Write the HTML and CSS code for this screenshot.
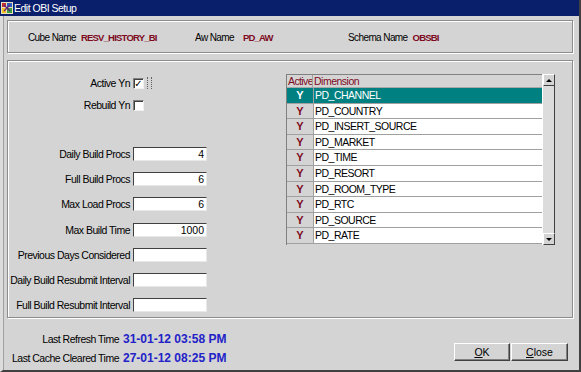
FILE: index.html
```html
<!DOCTYPE html>
<html>
<head>
  <title>Edit OBI Setup</title>
  <link rel="stylesheet" href="styles.css">
</head>
<body>
  <div class="window">
    <div class="titlebar">
      <svg class="app-icon" width="12" height="12" viewBox="0 0 12 12">
        <rect x="0" y="0" width="12" height="12" fill="#e8e0c0"/>
        <rect x="1" y="1" width="4" height="4" fill="#c03030"/>
        <rect x="6" y="1" width="5" height="4" fill="#3060c0"/>
        <rect x="1" y="6" width="4" height="5" fill="#f0c020"/>
        <rect x="6" y="6" width="5" height="5" fill="#40a040"/>
        <path d="M3 3 L9 9 M9 3 L3 9" stroke="#602080" stroke-width="1.2"/>
      </svg>
      <span>Edit OBI Setup</span>
    </div>

    <div class="content">
      <div class="panel header-panel">
        <div class="hdr-field cube"><span class="lbl">Cube Name</span><span class="val">RESV_HISTORY_BI</span></div>
        <div class="hdr-field aw"><span class="lbl">Aw Name</span><span class="val">PD_AW</span></div>
        <div class="hdr-field schema"><span class="lbl">Schema Name</span><span class="val">OBSBI</span></div>
      </div>

      <div class="panel main-panel">
        <div class="form">
          <div class="check-row first"><label>Active Yn</label><span class="check checked">&#10003;</span><span class="focus-mark"></span></div>
          <div class="check-row"><label>Rebuild Yn</label><span class="check"></span></div>

          <div class="fields">
            <div class="field-row"><label>Daily Build Procs</label><span class="input">4</span></div>
            <div class="field-row"><label>Full Build Procs</label><span class="input">6</span></div>
            <div class="field-row"><label>Max Load Procs</label><span class="input">6</span></div>
            <div class="field-row"><label>Max Build Time</label><span class="input">1000</span></div>
            <div class="field-row"><label>Previous Days Considered</label><span class="input"></span></div>
            <div class="field-row"><label>Daily Build Resubmit Interval</label><span class="input"></span></div>
            <div class="field-row"><label>Full Build Resubmit Interval</label><span class="input"></span></div>
          </div>
        </div>

        <div class="grid-wrap">
          <div class="grid">
            <div class="grid-head"><span class="c-active">Active</span><span class="c-dim">Dimension</span></div>
            <div class="grid-row selected"><span class="c-active">Y</span><span class="c-dim">PD_CHANNEL</span></div>
            <div class="grid-row"><span class="c-active">Y</span><span class="c-dim">PD_COUNTRY</span></div>
            <div class="grid-row"><span class="c-active">Y</span><span class="c-dim">PD_INSERT_SOURCE</span></div>
            <div class="grid-row"><span class="c-active">Y</span><span class="c-dim">PD_MARKET</span></div>
            <div class="grid-row"><span class="c-active">Y</span><span class="c-dim">PD_TIME</span></div>
            <div class="grid-row"><span class="c-active">Y</span><span class="c-dim">PD_RESORT</span></div>
            <div class="grid-row"><span class="c-active">Y</span><span class="c-dim">PD_ROOM_TYPE</span></div>
            <div class="grid-row"><span class="c-active">Y</span><span class="c-dim">PD_RTC</span></div>
            <div class="grid-row"><span class="c-active">Y</span><span class="c-dim">PD_SOURCE</span></div>
            <div class="grid-row"><span class="c-active">Y</span><span class="c-dim">PD_RATE</span></div>
          </div>
          <div class="scrollbar">
            <span class="sb-btn"><span class="arrow up"></span></span>
            <span class="sb-track"></span>
            <span class="sb-btn"><span class="arrow down"></span></span>
          </div>
        </div>
      </div>

      <div class="footer">
        <div class="times">
          <span class="t-lbl">Last Refresh Time</span><span class="t-val">31-01-12 03:58 PM</span>
          <span class="t-lbl">Last Cache Cleared Time</span><span class="t-val">27-01-12 08:25 PM</span>
        </div>
        <div class="buttons">
          <button class="btn"><u>O</u>K</button>
          <button class="btn"><u>C</u>lose</button>
        </div>
      </div>
    </div>
  </div>
</body>
</html>
```

FILE: styles.css
```css
body {
  margin: 0;
  width: 581px;
  height: 372px;
  overflow: hidden;
  background-color: #d4d4d4;
  font-family: "Liberation Sans", Arial, sans-serif;
  font-size: 10.5px;
  letter-spacing: -0.5px;
  color: #000;
}
.window {
  width: 581px;
  height: 372px;
  box-sizing: border-box;
  border-right: 2px solid #404040;
  border-bottom: 2px solid #404040;
  border-left: 3px solid #dcdcdc;
  display: flex;
  flex-direction: column;
}
.titlebar {
  height: 16px;
  margin-left: -3px;
  background-color: #0a1f6c;
  color: #fff;
  display: flex;
  align-items: center;
  padding-left: 1px;
}
.app-icon {
  margin-right: 1px;
}
.content {
  flex: 1;
  padding: 4px 6px 0 3px;
  border-left: 1px solid #a0a0a0;
}
.panel {
  border: 1px solid #8c8c8c;
  box-shadow: inset 1px 1px 0 #fff, 1px 1px 0 #fff;
  box-sizing: border-box;
}
.header-panel {
  height: 33px;
  display: flex;
  align-items: center;
  padding-left: 20px;
}
.hdr-field .lbl {
  font-size: 10px;
  letter-spacing: -0.6px;
  margin-right: 5px;
}
.hdr-field.aw .lbl {
  margin-right: 9px;
}
.hdr-field .val {
  color: #7d0a1e;
  font-weight: bold;
  font-size: 9.5px;
  letter-spacing: -0.8px;
}
.hdr-field.cube {
  width: 167px;
}
.hdr-field.aw {
  width: 153px;
}
.main-panel {
  margin-top: 7px;
  height: 258px;
  display: flex;
  justify-content: space-between;
  padding-right: 17px;
}
.form {
  width: 210px;
  padding-top: 15px;
}
.check-row {
  display: flex;
  align-items: center;
  height: 14px;
}
.check-row + .check-row {
  margin-top: 8px;
}
.check-row label,
.field-row label {
  width: 122px;
  text-align: right;
  margin-right: 3px;
  white-space: nowrap;
}
.check {
  width: 11px;
  height: 11px;
  box-sizing: border-box;
  background-color: #fff;
  border-top: 1px solid #808080;
  border-left: 1px solid #808080;
  border-right: 1px solid #f0f0f0;
  border-bottom: 1px solid #f0f0f0;
  box-shadow: inset 1px 1px 0 #404040;
  font-size: 10px;
  line-height: 10px;
  letter-spacing: 0;
  text-align: center;
  font-weight: bold;
  font-family: "DejaVu Sans", sans-serif;
}
.focus-mark {
  width: 3px;
  height: 12px;
  margin-left: 3px;
  border-left: 1px dotted #606060;
  border-right: 1px dotted #606060;
}
.fields {
  margin-top: 29px;
}
.field-row {
  display: flex;
  align-items: center;
  height: 25.3px;
}
.input {
  width: 74px;
  height: 14px;
  box-sizing: border-box;
  background-color: #fff;
  border-top: 1px solid #404040;
  border-left: 1px solid #404040;
  border-right: 1px solid #e8e8e8;
  border-bottom: 1px solid #e8e8e8;
  text-align: right;
  padding-right: 2px;
  line-height: 12px;
  letter-spacing: 0;
}
.grid-wrap {
  display: flex;
  margin-top: 13px;
  height: 171px;
}
.grid {
  width: 256px;
  border-left: 1px solid #808080;
  border-top: 1px solid #808080;
  box-sizing: border-box;
}
.grid-head,
.grid-row {
  display: flex;
  box-sizing: border-box;
}
.grid-head {
  height: 13px;
  line-height: 12px;
  color: #7d0a1e;
  border-bottom: 1px solid #a8a8a8;
}
.grid-row {
  height: 15.6px;
  line-height: 14px;
  border-bottom: 1px solid #a0a0a0;
}
.c-active {
  width: 26px;
  flex: none;
  text-align: center;
  border-right: 1px solid #a0a0a0;
  overflow: hidden;
  white-space: nowrap;
}
.grid-head .c-active {
  text-align: left;
  padding-left: 1px;
  box-sizing: border-box;
  letter-spacing: -0.6px;
}
.c-dim {
  flex: 1;
  padding-left: 1px;
  background-color: #fff;
}
.grid-head .c-dim {
  background-color: #d4d4d4;
}
.grid-row .c-active {
  color: #7d0a1e;
  font-weight: bold;
  font-size: 11px;
  letter-spacing: 0;
}
.grid-row.selected .c-active,
.grid-row.selected .c-dim {
  background-color: #008080;
  color: #fff;
}
.scrollbar {
  width: 13px;
  display: flex;
  flex-direction: column;
  border-left: 1px solid #fff;
  box-sizing: border-box;
}
.sb-btn {
  height: 12px;
  flex: none;
  box-sizing: border-box;
  background-color: #d4d4d4;
  border-top: 1px solid #fff;
  border-left: 1px solid #fff;
  border-right: 1px solid #404040;
  border-bottom: 1px solid #404040;
  display: flex;
  align-items: center;
  justify-content: center;
}
.arrow {
  width: 0;
  height: 0;
  border-left: 3px solid transparent;
  border-right: 3px solid transparent;
}
.arrow.up {
  border-bottom: 3px solid #000;
}
.arrow.down {
  border-top: 3px solid #000;
}
.sb-track {
  flex: 1;
  background-color: #dcdcdc;
  border-right: 1px solid #404040;
}
.footer {
  display: flex;
  justify-content: space-between;
  padding-top: 11px;
}
.times {
  display: grid;
  grid-template-columns: 112px auto;
  column-gap: 4px;
  grid-auto-rows: 19px;
  align-items: center;
}
.t-lbl {
  text-align: right;
  white-space: nowrap;
}
.t-val {
  color: #2222c8;
  font-weight: bold;
  font-size: 12px;
  letter-spacing: 0;
}
.buttons {
  display: flex;
  margin-top: 14px;
  margin-right: 5px;
  height: 18px;
}
.btn {
  font-family: inherit;
  font-size: 10.5px;
  letter-spacing: 0;
  height: 18px;
  padding: 0;
  background-color: #d4d4d4;
  border-top: 1px solid #fff;
  border-left: 1px solid #fff;
  border-right: 1px solid #404040;
  border-bottom: 1px solid #404040;
  box-shadow: inset -1px -1px 0 #808080;
  width: 56px;
}
.btn + .btn {
  width: 57px;
  margin-left: 1px;
}
```
